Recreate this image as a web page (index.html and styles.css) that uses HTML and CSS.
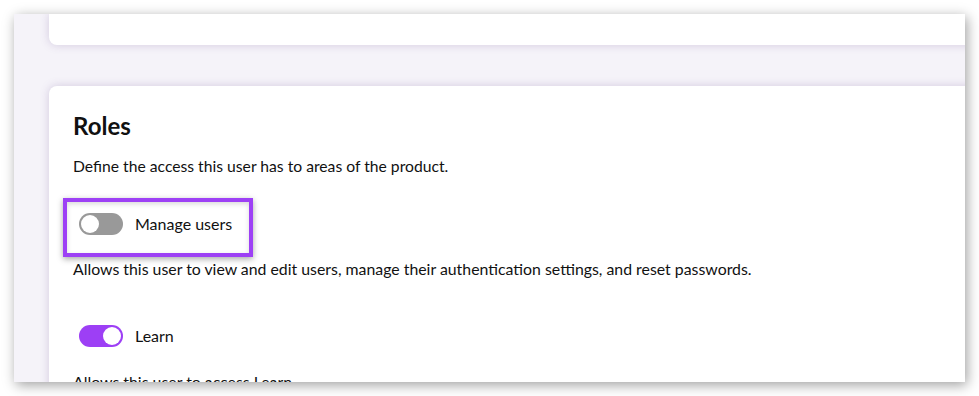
FILE: index.html
```html
<!DOCTYPE html>
<html>
<head>
<meta charset="utf-8">
<link rel="stylesheet" href="styles.css">
</head>
<body>
<div class="window">
  <div class="card card-top"></div>
  <div class="card card-roles">
    <h2 class="title">Roles</h2>
    <p class="desc">Define the access this user has to areas of the product.</p>
    <div class="highlight">
      <span class="toggle toggle-off"><span class="knob"></span></span>
      <span class="label">Manage users</span>
    </div>
    <p class="help">Allows this user to view and edit users, manage their authentication settings, and reset passwords.</p>
    <div class="role">
      <span class="toggle toggle-on"><span class="knob"></span></span>
      <span class="label">Learn</span>
    </div>
    <p class="help help-last">Allows this user to access Learn.</p>
  </div>
</div>
</body>
</html>
```

FILE: styles.css
```css
html, body {
  margin: 0;
  padding: 0;
  background: #ffffff;
}
body {
  width: 979px;
  height: 396px;
  overflow: hidden;
  font-family: Lato, "Open Sans", sans-serif;
  color: #111111;
}
.window {
  margin: 14px 0 0 14px;
  width: 951px;
  height: 368px;
  background: #f5f3f9;
  overflow: hidden;
  box-shadow: 2px 3px 12px rgba(0, 0, 0, 0.38);
}
.card {
  background: #ffffff;
  margin-left: 35px;
  width: 1000px;
  border-radius: 8px;
  box-shadow: 0 0 10px rgba(90, 60, 130, 0.22);
}
.card-top {
  height: 31px;
  border-radius: 0 0 8px 8px;
}
.card-roles {
  margin-top: 41px;
  padding: 20px 24px 40px;
  height: 400px;
}
.title {
  margin: 0;
  font-size: 24px;
  font-weight: 700;
  line-height: 40px;
}
.desc {
  margin: 10px 0 0;
  font-size: 15.7px;
  line-height: 20px;
}
.highlight {
  margin: 22px 0 0 -10px;
  width: 170px;
  height: 44px;
  border: 4px solid #9d40f5;
  display: flex;
  align-items: center;
  padding: 0 0 7px 12px;
  box-sizing: content-box;
  gap: 12px;
  box-shadow: 0 2px 6px rgba(0, 0, 0, 0.35), inset 0 2px 5px rgba(0, 0, 0, 0.15);
}
.highlight .label {
  white-space: nowrap;
}
.role {
  margin-top: 45px;
  display: flex;
  align-items: center;
  gap: 12px;
  height: 24px;
  padding-left: 6px;
}
.label {
  font-size: 16px;
  line-height: 20px;
}
.help {
  margin: 2px 0 0;
  font-size: 15.85px;
  line-height: 20px;
}
.help-last {
  margin-top: 24px;
}
.toggle {
  width: 44px;
  height: 22px;
  border-radius: 11px;
  display: flex;
  align-items: center;
  box-sizing: border-box;
  padding: 2px;
  flex: none;
}
.toggle-off {
  background: #999999;
  justify-content: flex-start;
}
.toggle-on {
  background: #9d3ff5;
  justify-content: flex-end;
}
.knob {
  width: 18px;
  height: 18px;
  border-radius: 50%;
  background: #ffffff;
}
```
